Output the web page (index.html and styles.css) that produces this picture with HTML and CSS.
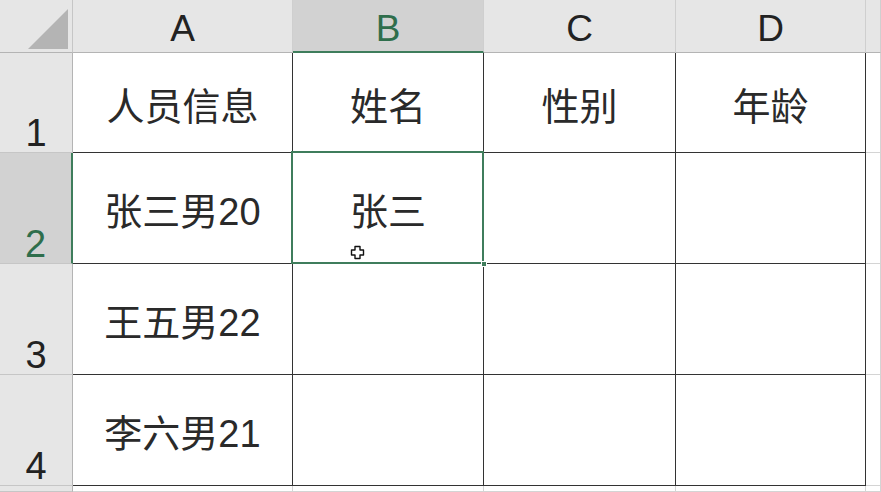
FILE: index.html
```html
<!DOCTYPE html>
<html lang="zh">
<head>
<meta charset="utf-8">
<title>Sheet</title>
<link rel="stylesheet" href="styles.css">
</head>
<body>
<div class="sheet">
  <div class="corner"><span class="tri"></span></div>
  <div class="ch">A</div>
  <div class="ch sel">B</div>
  <div class="ch">C</div>
  <div class="ch">D</div>
  <div class="ch"></div>

  <div class="rh">1</div>
  <div class="c">人员信息</div>
  <div class="c">姓名</div>
  <div class="c">性别</div>
  <div class="c">年龄</div>
  <div class="g"></div>

  <div class="rh sel">2</div>
  <div class="c">张三男20</div>
  <div class="c active">张三<span class="handle"></span>
    <svg class="cursor" width="15" height="15" viewBox="0 0 15 15"><path d="M5 1.5h5v3.5h3.5v5H10v3.5H5V10H1.5V5H5z" fill="#fff" stroke="#111" stroke-width="1.4" stroke-linejoin="round"/></svg>
  </div>
  <div class="c"></div>
  <div class="c"></div>
  <div class="g"></div>

  <div class="rh">3</div>
  <div class="c">王五男22</div>
  <div class="c"></div>
  <div class="c"></div>
  <div class="c"></div>
  <div class="g"></div>

  <div class="rh">4</div>
  <div class="c">李六男21</div>
  <div class="c"></div>
  <div class="c"></div>
  <div class="c"></div>
  <div class="g"></div>

  <div class="rh"></div>
  <div class="g"></div>
  <div class="g"></div>
  <div class="g"></div>
  <div class="g"></div>
  <div class="g"></div>
</div>
</body>
</html>
```

FILE: styles.css
```css
* { box-sizing: border-box; }
html, body { margin: 0; padding: 0; background: #fff; overflow: hidden; }
body { font-family: "Liberation Sans", "Noto Sans CJK SC", sans-serif; color: #222; }

.sheet {
  width: 881px;
  height: 492px;
  display: grid;
  grid-template-columns: 73px 220px 191px 192px 190px 1fr;
  grid-template-rows: 53px 100px 111px 111px 111px 1fr;
  overflow: hidden;
}

.corner {
  background: #e6e6e6;
  border-right: 1px solid #c6c6c6;
  border-bottom: 1px solid #b4b4b4;
  display: flex;
  align-items: flex-end;
  justify-content: flex-end;
  padding: 0 4px 3px 0;
}
.tri {
  width: 40px;
  height: 40px;
  background: #b4b4b4;
  clip-path: polygon(100% 0, 100% 100%, 0 100%);
}

.ch {
  background: #e6e6e6;
  border-right: 1px solid #cfcfcf;
  border-bottom: 1px solid #b4b4b4;
  display: flex;
  align-items: center;
  justify-content: center;
  font-size: 37px;
  line-height: 1;
  padding-top: 4px;
  color: #222;
}
.ch.sel {
  background: #d2d2d2;
  color: #2f6e4c;
  border-bottom: 2px solid #3f7d5c;
  padding-top: 5px;
}

.rh {
  background: #e6e6e6;
  border-right: 1px solid #b4b4b4;
  border-bottom: 1px solid #c6c6c6;
  display: flex;
  align-items: flex-end;
  justify-content: center;
  font-size: 38px;
  line-height: 1;
  color: #222;
}
.rh.sel {
  background: #d2d2d2;
  color: #2f6e4c;
  border-right: 2px solid #3f7d5c;
}

.c {
  border-right: 1px solid #333;
  border-bottom: 1px solid #333;
  display: flex;
  align-items: center;
  justify-content: center;
  font-size: 38px;
  padding-top: 1px;
  color: #2a2a2a;
  font-family: "Liberation Sans", "Noto Sans CJK SC", sans-serif;
}

.g {
  border-right: 1px solid #d4d4d4;
  border-bottom: 1px solid #d4d4d4;
}

.active { position: relative; }
.active::after {
  content: "";
  position: absolute;
  left: -2px;
  top: -2px;
  right: -1px;
  bottom: -1px;
  border: 2px solid #3f7d5c;
  pointer-events: none;
}
.handle {
  position: absolute;
  right: -4px;
  bottom: -4px;
  width: 6px;
  height: 6px;
  background: #3f7d5c;
  border: 1px solid #fff;
  z-index: 2;
}
.cursor {
  position: absolute;
  left: 57px;
  top: 92px;
}
```
